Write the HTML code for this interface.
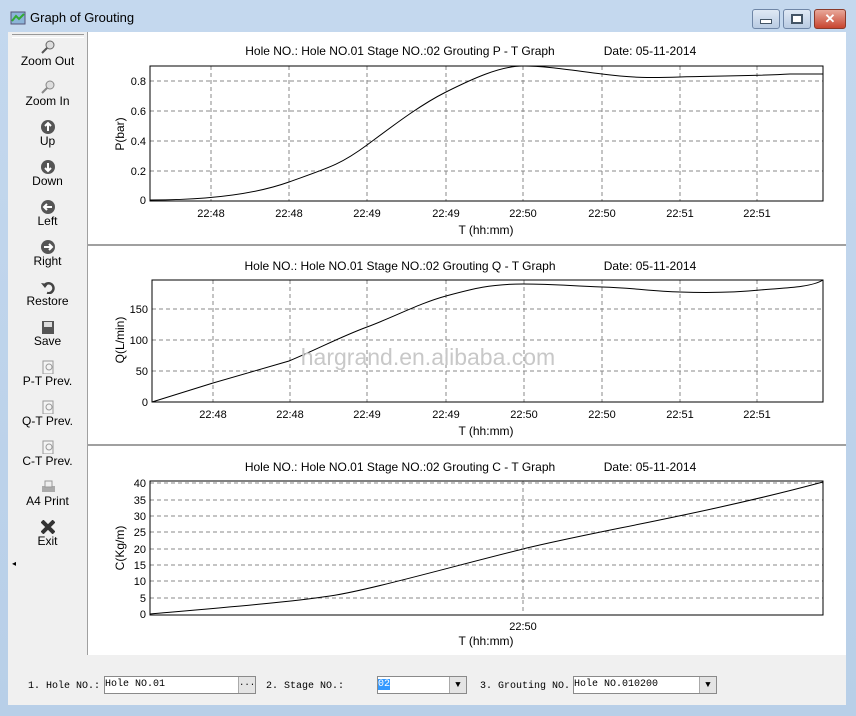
<!DOCTYPE html>
<html><head><meta charset="utf-8"><style>
body{margin:0;width:856px;height:716px;overflow:hidden;background:#fff;font-family:"Liberation Sans",Arial,sans-serif}
.win{position:absolute;left:0;top:0;width:856px;height:716px;background:linear-gradient(#c4d8ee,#b8cfe8);}
.title{position:absolute;left:30px;top:10px;font-size:13px;color:#000}
.side{position:absolute;left:8px;top:32px;width:79px;height:623px;background:#f0f0f0;border-right:1px solid #a0a0a0;}
.side .it{position:absolute;left:0;width:79px;text-align:center;font-size:12px;color:#000}
.ic{display:block;margin:0 auto;width:14px;height:14px}
.main{position:absolute;left:88px;top:32px;width:758px;height:623px;background:#fff}
.bot{position:absolute;left:8px;top:655px;width:838px;height:50px;background:#f0f0f0}
.lab{position:absolute;font-family:"Liberation Mono",monospace;font-size:10px;top:681px}
.box{position:absolute;top:676px;height:16px;background:#fff;border:1px solid #8a8a8a;font-family:"Liberation Mono",monospace;font-size:10px;line-height:16px}
.btn{position:absolute;right:0;top:0;width:16px;height:16px;background:#e4e4e4;border-left:1px solid #aaa;text-align:center;font-size:9px;line-height:16px}
.tb{position:absolute;top:9px;height:18px;border:1px solid #6f86a6;border-radius:3px;background:linear-gradient(#dfe9f5,#b9cbe2)}
</style></head><body>
<div class="win">
<svg style="position:absolute;left:10px;top:10px" width="16" height="16"><rect x="1" y="2" width="14" height="12" fill="#8cb4d8" stroke="#557"/><path d="M2 11 L6 6 L9 9 L14 4" stroke="#3a3" fill="none" stroke-width="2"/></svg>
<div class="title">Graph of Grouting</div>
<div class="tb" style="left:752px;width:26px"><div style="margin:9px auto 0;width:10px;height:3px;background:#fff;border:1px solid #456"></div></div>
<div class="tb" style="left:783px;width:26px"><div style="margin:4px auto 0;width:8px;height:6px;border:2px solid #456;background:#fff"></div></div>
<div class="tb" style="left:814px;width:30px;background:linear-gradient(#e8a89a,#c8452f);border-color:#8a3a2a;color:#fff;text-align:center;font-weight:bold;font-size:13px;line-height:18px">✕</div>
<div class="side">
<div style="position:absolute;left:4px;top:2px;width:72px;height:2px;border-top:1px solid #999;border-bottom:1px solid #fff"></div>
<div class="it" style="top:8px"><svg class="ic"><circle cx="9" cy="5" r="4" fill="#ddd" stroke="#666"/><path d="M6 8 L1 13" stroke="#555" stroke-width="2"/></svg>Zoom Out</div>
<div class="it" style="top:48px"><svg class="ic"><circle cx="9" cy="5" r="4" fill="#ddd" stroke="#888"/><path d="M6 8 L1 13" stroke="#888" stroke-width="2"/></svg>Zoom In</div>
<div class="it" style="top:88px"><svg class="ic"><circle cx="7" cy="7" r="7" fill="#555"/><path d="M7 11V3M4 6l3-3 3 3" stroke="#fff" stroke-width="2" fill="none"/></svg>Up</div>
<div class="it" style="top:128px"><svg class="ic"><circle cx="7" cy="7" r="7" fill="#555"/><path d="M7 3v8M4 8l3 3 3-3" stroke="#fff" stroke-width="2" fill="none"/></svg>Down</div>
<div class="it" style="top:168px"><svg class="ic"><circle cx="7" cy="7" r="7" fill="#555"/><path d="M11 7H3M6 4L3 7l3 3" stroke="#fff" stroke-width="2" fill="none"/></svg>Left</div>
<div class="it" style="top:208px"><svg class="ic"><circle cx="7" cy="7" r="7" fill="#555"/><path d="M3 7h8M8 4l3 3-3 3" stroke="#fff" stroke-width="2" fill="none"/></svg>Right</div>
<div class="it" style="top:248px"><svg class="ic"><path d="M3 6a5 5 0 1 1 3 7" stroke="#444" stroke-width="2.5" fill="none"/><path d="M0 3l4 5 3-4z" fill="#444"/></svg>Restore</div>
<div class="it" style="top:288px"><svg class="ic"><rect x="1" y="1" width="12" height="13" fill="#555"/><rect x="3" y="2" width="8" height="5" fill="#ddd"/></svg>Save</div>
<div class="it" style="top:328px"><svg class="ic"><rect x="2" y="1" width="10" height="13" fill="#f4f4f4" stroke="#999"/><circle cx="8" cy="7" r="3" fill="none" stroke="#999"/></svg>P-T Prev.</div>
<div class="it" style="top:368px"><svg class="ic"><rect x="2" y="1" width="10" height="13" fill="#f4f4f4" stroke="#999"/><circle cx="8" cy="7" r="3" fill="none" stroke="#999"/></svg>Q-T Prev.</div>
<div class="it" style="top:408px"><svg class="ic"><rect x="2" y="1" width="10" height="13" fill="#f4f4f4" stroke="#999"/><circle cx="8" cy="7" r="3" fill="none" stroke="#999"/></svg>C-T Prev.</div>
<div class="it" style="top:448px"><svg class="ic"><rect x="1" y="6" width="13" height="6" fill="#aaa"/><rect x="4" y="1" width="7" height="6" fill="#eee" stroke="#999"/></svg>A4 Print</div>
<div class="it" style="top:488px"><svg class="ic"><path d="M1 1L13 13M13 1L1 13" stroke="#333" stroke-width="4"/></svg>Exit</div>
<div style="position:absolute;left:4px;top:527px;font-size:8px">◂</div>
</div>
<div class="main"></div>
<svg style="position:absolute;left:0;top:0" width="856" height="716" font-family="Liberation Sans, Arial, sans-serif" font-size="12">
<g fill="#000" text-anchor="middle">
<text x="400" y="55">Hole NO.: Hole NO.01 Stage NO.:02 Grouting P - T Graph</text><text x="650" y="55">Date:  05-11-2014</text>
<text x="400" y="270">Hole NO.: Hole NO.01 Stage NO.:02 Grouting Q - T Graph</text><text x="650" y="270">Date:  05-11-2014</text>
<text x="400" y="471">Hole NO.: Hole NO.01 Stage NO.:02 Grouting C - T Graph</text><text x="650" y="471">Date:  05-11-2014</text>
<text x="486" y="234">T (hh:mm)</text><text x="486" y="435">T (hh:mm)</text><text x="486" y="645">T (hh:mm)</text>
</g>
<rect x="88" y="244" width="758" height="2" fill="#a0a0a0"/><rect x="88" y="444" width="758" height="2" fill="#a0a0a0"/>
<g stroke="#888" stroke-dasharray="4,3" fill="none">
<path d="M211 66V201M289 66V201M367 66V201M446 66V201M523 66V201M602 66V201M680 66V201M757 66V201M150 81H823M150 111H823M150 141H823M150 171H823"/>
<path d="M213 280V402M290 280V402M367 280V402M446 280V402M524 280V402M602 280V402M680 280V402M757 280V402M152 309H823M152 340H823M152 371H823"/>
<path d="M523 481V614M150 483H823M150 500H823M150 516H823M150 532H823M150 549H823M150 565H823M150 581H823M150 598H823"/>
</g>
<g stroke="#000" fill="none">
<rect x="150" y="66" width="673" height="135"/><rect x="152" y="280" width="671" height="122"/><rect x="150" y="481" width="673" height="134"/>
<path d="M150 200 C200 200 250 196 289 182 S340 165 367 145 S420 105 446 92 S500 66 523 66 S570 70 602 74 S650 78 680 77 S757 76 790 74 L823 74"/>
<path d="M152 402 L213 383 L289 361 C320 348 340 337 367 327 S420 303 446 296 S490 284 523 284 S570 286 602 287 S650 291 680 292 S740 292 760 290 S810 288 823 280"/>
<path d="M150 614 C230 607 290 602 330 596 S450 567 523 549 S700 515 823 482"/>
</g>
<g font-size="11" text-anchor="end">
<text x="146" y="85">0.8</text><text x="146" y="115">0.6</text><text x="146" y="145">0.4</text><text x="146" y="175">0.2</text><text x="146" y="204">0</text>
<text x="148" y="313">150</text><text x="148" y="344">100</text><text x="148" y="375">50</text><text x="148" y="406">0</text>
<text x="146" y="487">40</text><text x="146" y="504">35</text><text x="146" y="520">30</text><text x="146" y="536">25</text><text x="146" y="553">20</text><text x="146" y="569">15</text><text x="146" y="585">10</text><text x="146" y="602">5</text><text x="146" y="618">0</text>
</g>
<g font-size="11" text-anchor="middle">
<text x="211" y="217">22:48</text><text x="289" y="217">22:48</text><text x="367" y="217">22:49</text><text x="446" y="217">22:49</text><text x="523" y="217">22:50</text><text x="602" y="217">22:50</text><text x="680" y="217">22:51</text><text x="757" y="217">22:51</text>
<text x="213" y="418">22:48</text><text x="290" y="418">22:48</text><text x="367" y="418">22:49</text><text x="446" y="418">22:49</text><text x="524" y="418">22:50</text><text x="602" y="418">22:50</text><text x="680" y="418">22:51</text><text x="757" y="418">22:51</text>
<text x="523" y="630">22:50</text>
</g>
<g font-size="12" text-anchor="middle">
<text transform="translate(124 134) rotate(-90)">P(bar)</text>
<text transform="translate(124 340) rotate(-90)">Q(L/min)</text>
<text transform="translate(124 548) rotate(-90)">C(Kg/m)</text>
</g>
<text x="428" y="365" font-size="23" fill="#c8c8c8" text-anchor="middle">hargrand.en.alibaba.com</text>
</svg>
<div class="bot"></div>
<div class="lab" style="left:28px">1. Hole NO.:</div>
<div class="box" style="left:104px;width:150px">Hole NO.01<div class="btn">···</div></div>
<div class="lab" style="left:266px">2. Stage NO.:</div>
<div class="box" style="left:377px;width:88px"><span style="background:#3399ff;color:#fff">02</span><div class="btn">▼</div></div>
<div class="lab" style="left:480px">3. Grouting NO.</div>
<div class="box" style="left:573px;width:142px">Hole NO.010200<div class="btn">▼</div></div>
</div>
</body></html>
